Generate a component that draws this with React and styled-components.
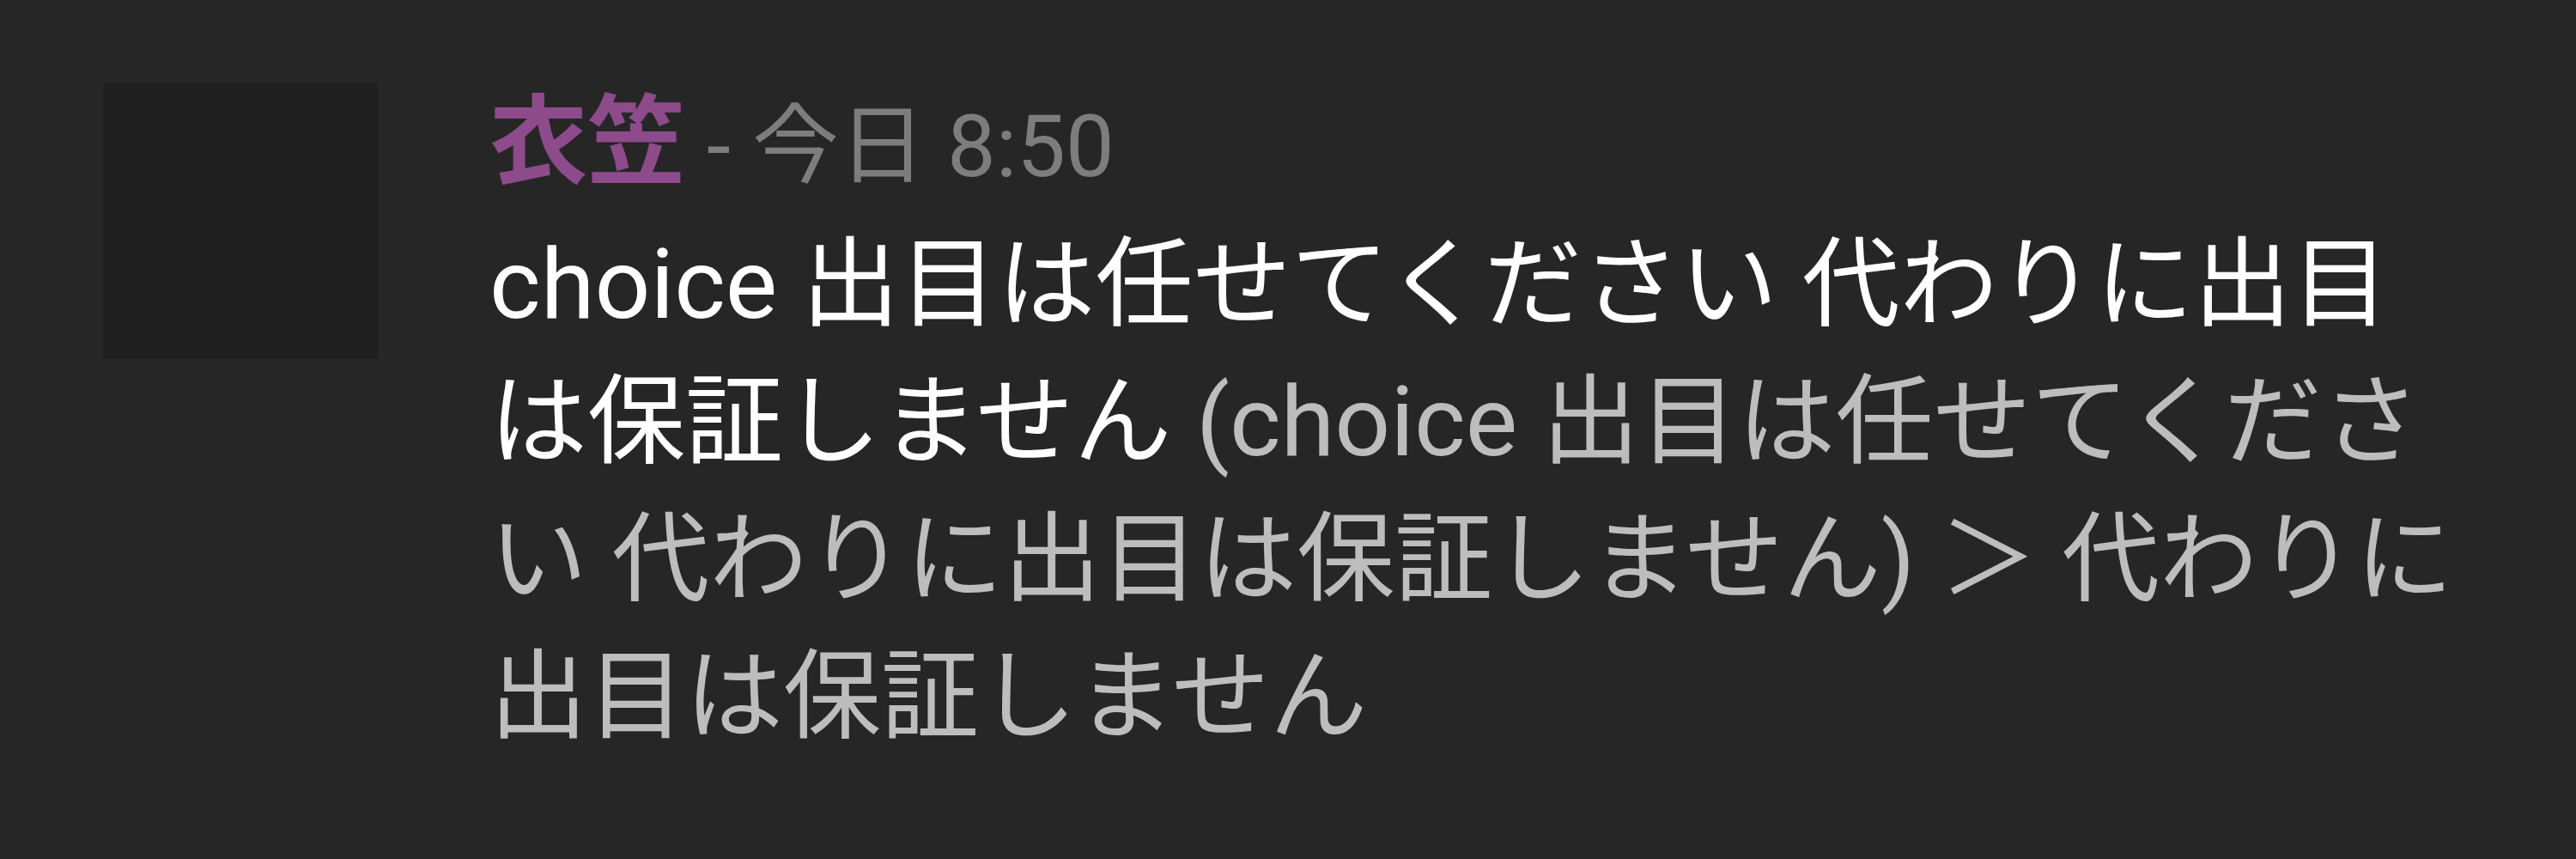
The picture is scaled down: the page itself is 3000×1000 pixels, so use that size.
import React from "react";
import styled, { createGlobalStyle } from "styled-components";

const GlobalStyle = createGlobalStyle`
  html, body {
    margin: 0;
    padding: 0;
    background: #262626;
  }
`;

const Page = styled.div`
  width: 3000px;
  min-height: 1000px;
  box-sizing: border-box;
  padding: 86px 125px 0 120px;
  background: #262626;
  display: flex;
  align-items: flex-start;
  gap: 130px;
  font-family: Roboto, "Noto Sans CJK JP", sans-serif;
`;

const Avatar = styled.div`
  flex-shrink: 0;
  width: 320px;
  height: 320px;
  margin-top: 11px;
  background: #1f1f1f;
`;

const Content = styled.div`
  flex: 1;
  min-width: 0;
  font-size: 114px;
  line-height: 160px;
`;

const Header = styled.div`
  white-space: nowrap;
`;

const Name = styled.span`
  font-weight: 700;
  color: #8e4b8b;
`;

const Meta = styled.span`
  font-size: 101px;
  color: #7d7d7d;
`;

const Body = styled.div`
  color: #ffffff;
`;

const Quote = styled.span`
  color: #bdbdbd;
`;

export default function App() {
  return (
    <>
      <GlobalStyle />
      <Page>
        <Avatar />
        <Content>
          <Header>
            <Name>衣笠</Name>
            <Meta> - 今日 8:50</Meta>
          </Header>
          <Body>
            choice 出目は任せてください 代わりに出目は保証しません
            <Quote>
              {" "}(choice 出目は任せてください 代わりに出目は保証しません) ＞ 代わりに出目は保証しません
            </Quote>
          </Body>
        </Content>
      </Page>
    </>
  );
}
